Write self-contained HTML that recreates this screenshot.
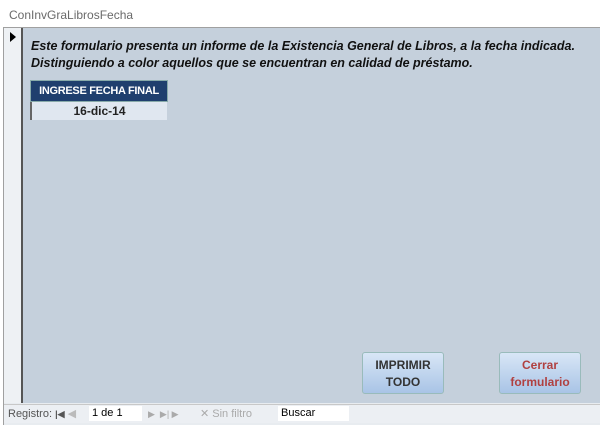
<!DOCTYPE html>
<html><head><style>
body{margin:0;width:600px;height:425px;background:#fff;position:relative;overflow:hidden;font-family:"Liberation Sans",sans-serif}
.t{position:absolute;left:9px;top:8px;font-size:12px;color:#6a6a6a}
.frame{position:absolute;left:3px;top:27px;width:597px;height:397px;border-top:1px solid #a0a0a0;border-left:1px solid #a0a0a0;background:#e8ecf0}
.sel{position:absolute;left:4px;top:28px;width:17px;height:375px;background:#eef1f4}
.form{position:absolute;left:21px;top:28px;width:579px;height:375px;background:#c5d0dc;border-left:2px solid #555}
.txt{position:absolute;left:31px;top:38px;font-size:12.5px;font-style:italic;font-weight:bold;color:#111;line-height:17px;white-space:nowrap}
.hdr{position:absolute;left:30px;top:80px;width:136px;height:20px;background:#1f3f6e;color:#fff;font-weight:bold;font-size:11px;line-height:20px;text-align:center;border:1px solid #8aa;white-space:nowrap;letter-spacing:-0.3px}
.val{position:absolute;left:30px;top:102px;width:135px;height:18px;background:#e0e7f0;border-left:2px solid #666;font-weight:bold;font-size:12px;line-height:18px;text-align:center;color:#222}
.btn{position:absolute;top:352px;width:82px;height:42px;border:1px solid #9bb;border-radius:3px;background:linear-gradient(#d8e6f6,#a9c4e6);font-weight:bold;font-size:12px;text-align:center;line-height:17px;padding-top:4px;box-sizing:border-box}
.nav{position:absolute;left:4px;top:404px;width:596px;height:18px;background:#eceff3;border-top:1px solid #c8c8c8;font-size:11px;color:#555;line-height:18px}
</style></head><body>
<div class="t">ConInvGraLibrosFecha</div>
<div class="frame"></div>
<div class="sel"><div style="position:absolute;left:6px;top:4px;width:0;height:0;border-left:6px solid #000;border-top:5px solid transparent;border-bottom:5px solid transparent"></div></div>
<div class="form"></div>
<div class="txt">Este formulario presenta un informe de la Existencia General de Libros, a la fecha indicada.<br>Distinguiendo a color aquellos que se encuentran en calidad de préstamo.</div>
<div class="hdr">INGRESE FECHA FINAL</div>
<div class="val">16-dic-14</div>
<div class="btn" style="left:362px;color:#333">IMPRIMIR<br>TODO</div>
<div class="btn" style="left:499px;color:#b04040">Cerrar<br>formulario</div>
<div class="nav">
<span style="position:absolute;left:4px">Registro: <b style="font-size:9px">|◀</b> <span style="color:#bbb">◀</span></span>
<span style="position:absolute;left:85px;top:1px;width:50px;height:15px;background:#fff;line-height:15px;color:#000;padding-left:3px">1 de 1</span>
<span style="position:absolute;left:144px;color:#aaa;font-size:9px">▶ &nbsp;▶| ▶</span>
<span style="position:absolute;left:196px;color:#aaa">✕ Sin filtro</span>
<span style="position:absolute;left:274px;top:1px;width:68px;height:15px;background:#fff;line-height:15px;color:#000;padding-left:3px">Buscar</span>
</div>
</body></html>
